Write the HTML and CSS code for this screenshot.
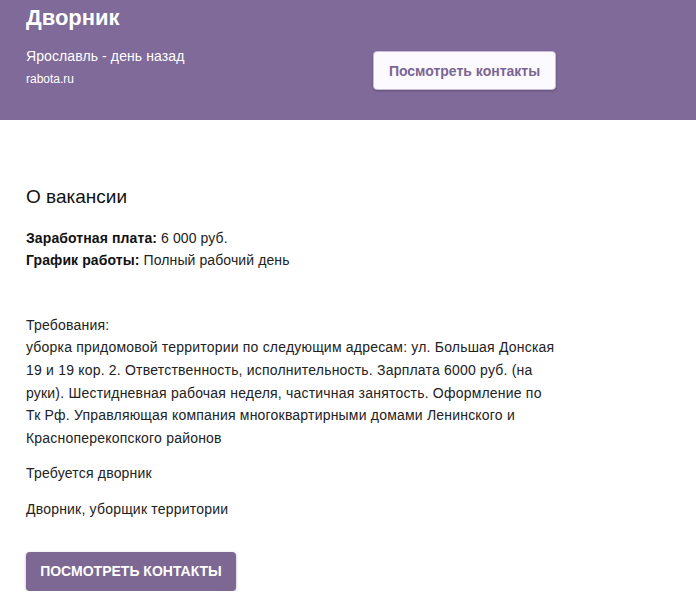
FILE: index.html
```html
<!DOCTYPE html>
<html lang="ru">
<head>
    <meta charset="UTF-8">
    <meta name="viewport" content="width=device-width, initial-scale=1.0">
    <title>Дворник</title>
    <link rel="stylesheet" href="styles.css">
</head>
<body>

    <div class="vacancy-header">
        <div class="header-info">
            <h1>Дворник</h1>
            <div class="location">Ярославль - день назад</div>
            <div class="source">rabota.ru</div>
        </div>
        <button class="contacts-btn">Посмотреть контакты</button>
    </div>

    <div class="vacancy-body">
        <h2>О вакансии</h2>
        <div class="facts">
            <div><b>Заработная плата:</b> 6 000 руб.</div>
            <div><b>График работы:</b> Полный рабочий день</div>
        </div>

        <div class="description">
            <p>Требования:<br>уборка придомовой территории по следующим адресам: ул. Большая Донская 19 и 19 кор. 2. Ответственность, исполнительность. Зарплата 6000 руб. (на руки). Шестидневная рабочая неделя, частичная занятость. Оформление по Тк Рф. Управляющая компания многоквартирными домами Ленинского и Красноперекопского районов</p>
            <p>Требуется дворник</p>
            <p>Дворник, уборщик территории</p>
        </div>

        <button class="contacts-btn-main">Посмотреть контакты</button>
    </div>

</body>
</html>
```

FILE: styles.css
```css
body {
    margin: 0;
    font-family: "Liberation Sans", Arial, sans-serif;
    color: #222;
    background-color: #fff;
}

.vacancy-header {
    display: flex;
    align-items: flex-start;
    height: 120px;
    box-sizing: border-box;
    padding: 5px 0 0 26px;
    background-color: #806a99;
    color: #fff;
}

.header-info {
    width: 347px;
}

.header-info h1 {
    margin: 0;
    font-size: 22px;
    line-height: 26px;
    font-weight: bold;
}

.location {
    margin-top: 15px;
    font-size: 14px;
    line-height: 20px;
    letter-spacing: 0.1px;
}

.source {
    margin-top: 4px;
    font-size: 12px;
    line-height: 18px;
}

.contacts-btn {
    margin-top: 46px;
    width: 183px;
    height: 39px;
    padding: 0;
    border: 1px solid #c8bcd6;
    border-radius: 4px;
    background-color: #fdfaff;
    color: #7a6593;
    font-family: "Liberation Sans", Arial, sans-serif;
    font-size: 14px;
    font-weight: bold;
    box-shadow: 0 1px 2px rgba(0, 0, 0, 0.25);
    cursor: pointer;
}

.vacancy-body {
    padding: 65px 26px 0 26px;
}

.vacancy-body h2 {
    margin: 0;
    font-size: 19px;
    line-height: 24px;
    font-weight: normal;
    color: #111;
}

.facts {
    margin-top: 18px;
    font-size: 14px;
    line-height: 22.4px;
    letter-spacing: 0.1px;
}

.facts b {
    color: #111;
}

.description {
    margin-top: 42px;
    width: 530px;
    font-size: 14px;
    line-height: 22.6px;
    letter-spacing: 0.2px;
}

.description p {
    margin: 0 0 13px 0;
}

.contacts-btn-main {
    margin-top: 18px;
    width: 210px;
    height: 39px;
    padding: 0;
    border: none;
    border-radius: 4px;
    background-color: #7d6793;
    color: #fff;
    font-family: "Liberation Sans", Arial, sans-serif;
    font-size: 14px;
    font-weight: bold;
    text-transform: uppercase;
    box-shadow: 0 1px 3px rgba(0, 0, 0, 0.3);
    cursor: pointer;
}
```
